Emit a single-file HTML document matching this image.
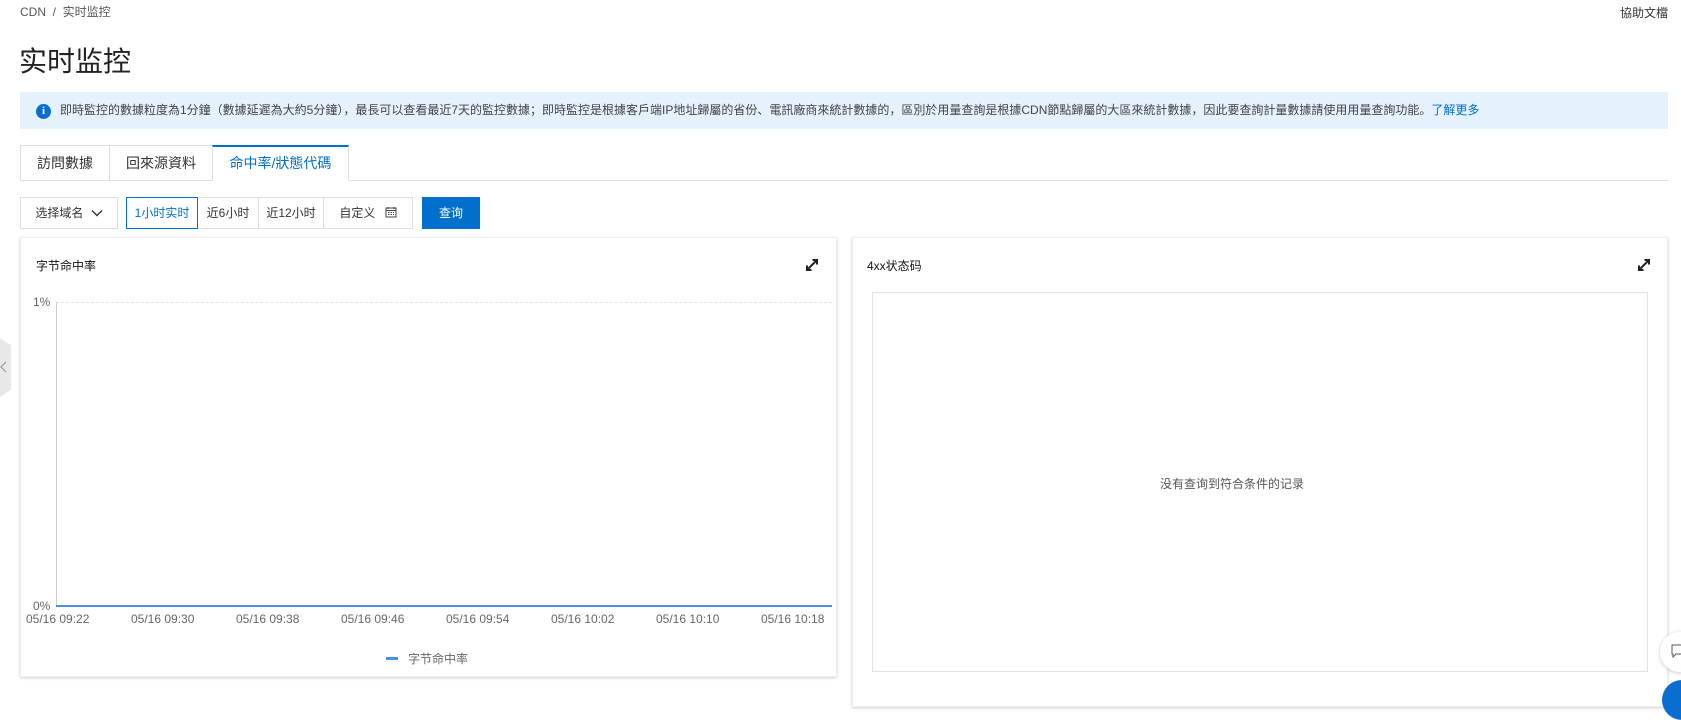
<!DOCTYPE html>
<html><head><meta charset="utf-8">
<style>
*{box-sizing:border-box;margin:0;padding:0}
body{width:1681px;height:690px;overflow:hidden;background:#fff;font-family:"Liberation Sans","Noto Sans CJK SC",sans-serif;color:#333;position:relative}
.abs{position:absolute}
.bc{left:20px;top:3px;font-size:12px;color:#555}
.help{left:1620px;top:4px;font-size:12px;color:#333}
.title{left:19px;top:40px;font-size:28px;color:#222;font-weight:400}
.info{left:20px;top:92px;width:1648px;height:37px;background:#e5f1fc;font-size:12px;color:#444;line-height:37px;padding-left:40px;white-space:nowrap}
.info a{color:#0070cc}
.tabline{left:20px;top:180px;width:1648px;height:1px;background:#ddd}
.tab{top:145px;height:36px;border:1px solid #ddd;background:#fff;font-size:14px;color:#333;line-height:34px;text-align:center}
.tab.act{border-top:2px solid #0070cc;color:#0070cc;border-bottom-color:#fff;line-height:32px}
.btn{top:197px;height:32px;border:1px solid #ddd;font-size:12px;line-height:30px;text-align:center;color:#333;background:#fff}
.card{background:#fff;box-shadow:0 1px 3px rgba(0,0,0,.18);border:1px solid #eee}
.ct{font-size:12px;color:#111}
.ax{font-size:12px;color:#666}
</style></head><body>
<div class="abs bc">CDN &nbsp;/&nbsp; 实时监控</div>
<div class="abs help">協助文檔</div>
<div class="abs title">实时监控</div>
<div class="abs info">即時監控的數據粒度為1分鐘（數據延遲為大約5分鐘），最長可以查看最近7天的監控數據；即時監控是根據客戶端IP地址歸屬的省份、電訊廠商來統計數據的，區別於用量查詢是根據CDN節點歸屬的大區來統計數據，因此要查詢計量數據請使用用量查詢功能。<a>了解更多</a></div>
<div class="abs" style="left:36px;top:104px;width:15px;height:15px;border-radius:50%;background:#0a6ed1;color:#fff;font-size:11px;line-height:15px;text-align:center;font-weight:bold;font-family:'Liberation Serif',serif">i</div>
<div class="abs tabline"></div>
<div class="abs tab" style="left:20px;width:90px">訪問數據</div>
<div class="abs tab" style="left:109px;width:104px">回來源資料</div>
<div class="abs tab act" style="left:212px;width:137px;height:36px">命中率/狀態代碼</div>

<div class="abs btn" style="left:20px;width:98px">选择域名 <svg width="12" height="8" viewBox="0 0 12 8" style="margin-left:4px"><path d="M1 1.5l5 5 5-5" fill="none" stroke="#333" stroke-width="1.4"/></svg></div>
<div class="abs btn" style="left:126px;width:72px;border-color:#0070cc;color:#0070cc;z-index:2">1小时实时</div>
<div class="abs btn" style="left:197px;width:62px">近6小时</div>
<div class="abs btn" style="left:258px;width:66px">近12小时</div>
<div class="abs btn" style="left:323px;width:90px">自定义 <svg width="12" height="12" viewBox="0 0 12 12" style="margin-left:6px;vertical-align:-1px"><rect x="1" y="2" width="10" height="9" fill="none" stroke="#444"/><path d="M1 4.5h10M3 1v2M9 1v2M3 6.5h1.5M5.5 6.5h1.5M8 6.5h1M3 8.5h1.5M5.5 8.5h1.5M8 8.5h1" stroke="#444"/></svg></div>
<div class="abs btn" style="left:422px;width:58px;background:#0070cc;border-color:#0070cc;color:#fff">查询</div>

<div class="abs card" style="left:20px;top:237px;width:817px;height:440px"></div>
<div class="abs ct" style="left:36px;top:257px">字节命中率</div>
<svg class="abs" style="left:804px;top:257px" width="16" height="16" viewBox="0 0 16 16"><path d="M3 13L13 3M8.5 3H13V7.5M3 8.5V13H7.5" fill="none" stroke="#222" stroke-width="2"/></svg>
<div class="abs ax" style="left:33px;top:295px">1%</div>
<div class="abs ax" style="left:33px;top:599px">0%</div>
<div class="abs" style="left:56px;top:302px;width:776px;border-top:1px dashed #e3e3e3"></div>
<div class="abs" style="left:56px;top:302px;width:1px;height:305px;background:#ccc"></div>
<div class="abs" style="left:56px;top:605px;width:776px;height:2px;background:#4a90e2"></div>
<div class="abs ax" style="top:612px;left:26px;width:810px;height:14px">
<span class="abs" style="left:0">05/16 09:22</span><span class="abs" style="left:105px">05/16 09:30</span><span class="abs" style="left:210px">05/16 09:38</span><span class="abs" style="left:315px">05/16 09:46</span><span class="abs" style="left:420px">05/16 09:54</span><span class="abs" style="left:525px">05/16 10:02</span><span class="abs" style="left:630px">05/16 10:10</span><span class="abs" style="left:735px">05/16 10:18</span></div>
<div class="abs" style="left:386px;top:657px;width:12px;height:3px;background:#4a90e2"></div>
<div class="abs ax" style="left:408px;top:650px">字节命中率</div>

<div class="abs card" style="left:852px;top:237px;width:816px;height:470px"></div>
<div class="abs ct" style="left:867px;top:257px">4xx状态码</div>
<svg class="abs" style="left:1636px;top:257px" width="16" height="16" viewBox="0 0 16 16"><path d="M3 13L13 3M8.5 3H13V7.5M3 8.5V13H7.5" fill="none" stroke="#222" stroke-width="2"/></svg>
<div class="abs" style="left:872px;top:292px;width:776px;height:380px;border:1px solid #e3e3e3"></div>
<div class="abs" style="left:1160px;top:475px;font-size:12px;color:#555">没有查询到符合条件的记录</div>

<div class="abs" style="left:0;top:338px;width:11px;height:59px;background:#e8e8e8;clip-path:polygon(0 0,100% 12%,100% 88%,0 100%)"></div>
<svg class="abs" style="left:0;top:360px" width="8" height="14" viewBox="0 0 8 14"><path d="M6 2L1 7l5 5" fill="none" stroke="#999" stroke-width="1.2"/></svg>
<div class="abs" style="left:1660px;top:632px;width:40px;height:40px;border-radius:50%;background:#fff;box-shadow:0 1px 5px rgba(0,0,0,.2)"></div>
<svg class="abs" style="left:1671px;top:644px" width="12" height="14" viewBox="0 0 12 14"><path d="M1 1h10v9H5l-3 3v-3H1z" fill="none" stroke="#555"/></svg>
<div class="abs" style="left:1662px;top:680px;width:40px;height:40px;border-radius:50%;background:#0a6ed1"></div>
</body></html>
